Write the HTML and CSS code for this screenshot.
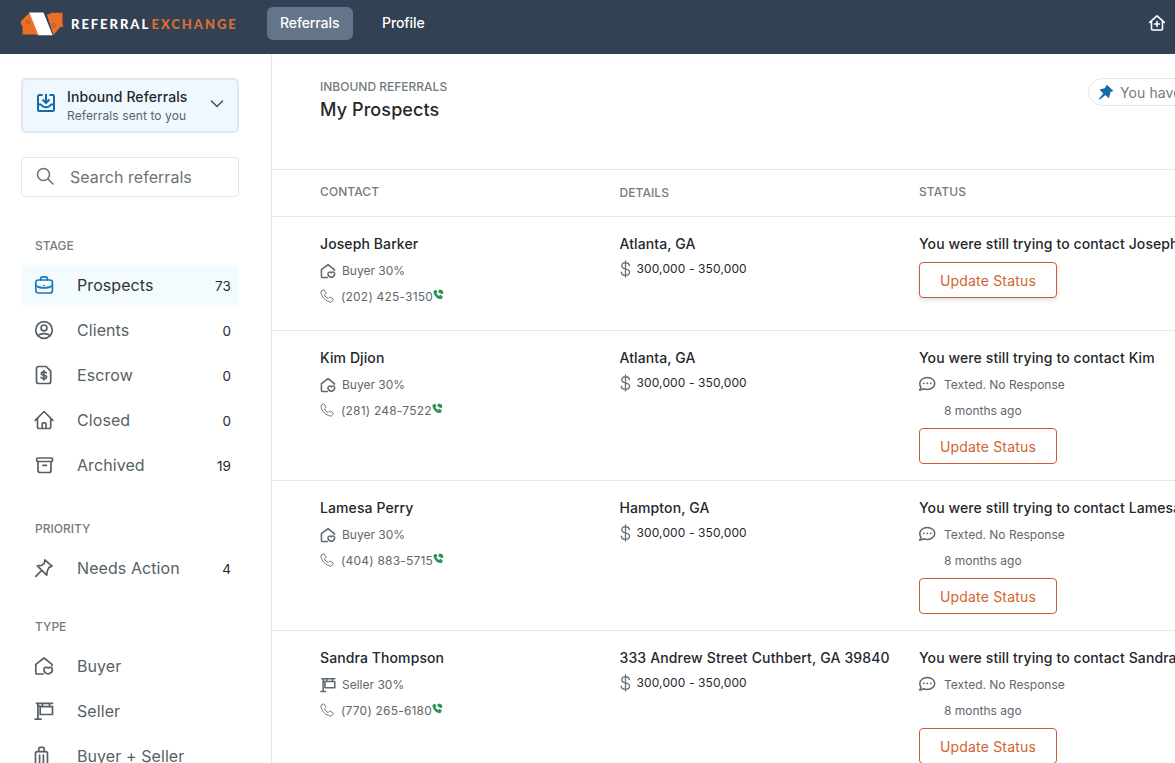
FILE: index.html
```html
<!DOCTYPE html>
<html lang="en">
<head>
<meta charset="utf-8">
<title>My Prospects</title>
<link rel="stylesheet" href="styles.css">
</head>
<body>
<svg class="sprite" aria-hidden="true">
  <symbol id="i-buyer" viewBox="0 0 20 20"><path d="M9.300 18H2.800a1 1 0 0 1-1-1V8.300L10 2l8 6.300v1.200"/><path d="M13.800 11.900c-1-1.200-3.900-.7-3.900 1.600 0 2.400 2.100 4 4.200 4.500 2.100-.5 4.300-2.100 4.300-4.500 0-2.300-2.800-2.800-3.800-1.600-.2.300-.6.300-.8 0z"/></symbol>
  <symbol id="i-seller" viewBox="0 0 20 20"><path d="M2.500 2.300h16M3.900 2.300v15.900M1.200 18.200h5.800M3.900 5.200h2M8.500 2.500v3M15.500 2.500v3M6.200 5.600h12.300v7.900H6.200z"/></symbol>
  <symbol id="i-phone" viewBox="0 0 20 20"><path d="M2 3.300 4.300 1.400c.6-.4 1.300-.3 1.700.2l2.200 3.700c.4.700.2 1.300-.3 1.700L6.400 8.400c.9 2.100 2.900 4.200 5.300 5.300l1.400-1.600c.4-.5 1.100-.6 1.700-.3l3.600 2.100c.6.400.7 1.100.4 1.700l-1.900 2.500c-.4.500-1 .7-1.700.6C7.800 17.400 2.100 11.200 1.400 4.900c-.1-.7.100-1.200.6-1.600z"/></symbol>
  <symbol id="i-call" viewBox="0 0 12 12"><path d="M1.300 1.500 3.400.8l1.500 2.700-1.200 1.200c.7 1.400 1.700 2.300 3 2.900l1.200-1.200 2.700 1.400-.6 2.400c-.2.500-.6.800-1.200.8C4.400 10.800.6 7 .5 2.700c0-.6.300-1 .8-1.200z"/><path d="M5.900 1.400 7.800.6l2.600 1 .9 2.200-.8 1.900-1.700-.5-2.600-1.300z"/></symbol>
  <symbol id="i-dollar" viewBox="0 0 12 20"><path d="M6 1v18M10.300 6.200C10 4 8.400 3 6 3 3.500 3 1.800 4.200 1.800 6.400c0 2.300 1.800 3 4.200 3.500 2.600.6 4.500 1.400 4.500 3.800C10.500 16 8.600 17 6 17c-2.600 0-4.400-1.100-4.700-3.600"/></symbol>
  <symbol id="i-chat" viewBox="0 0 20 20"><path d="M10.300 2.800c4.600 0 8.300 2.900 8.300 6.600S14.900 16 10.300 16c-1.500 0-2.900-.3-4.100-.8-1 .8-2.500 1.500-4.500 1.500 1.100-1 1.500-2.200 1.500-3.300C2.400 12.300 2 10.900 2 9.400c0-3.700 3.700-6.600 8.300-6.600z"/><path class="dots" d="M6.500 9.300h.1M10.300 9.300h.1M14.100 9.300h.1"/></symbol>
</svg>

<header class="topbar">
  <a class="logo">
    <svg class="logo-mark" viewBox="0 0 44 24" width="44" height="24">
      <path fill="#ec6f28" d="M1 9 9.500.8H14L20 23H2.500V14.500L.8 12zM27 3l1.500-1.500 1 1L31 .8h11.500v11l.8 2.700-3 .5L33.500 23z"/>
      <path fill="#fff" d="M9.300.5h14.200l9.200 22.800H18.500z"/>
      <path fill="none" stroke="#8e5336" stroke-width="1" d="M8 8.400l2 2-2 2-2-2zM34 11.400l2 2-2 2-2-2zM2.500 14.500v8h13"/>
    </svg>
    <span class="logo-text">REFERRAL</span><span class="logo-text logo-accent">EXCHANGE</span>
  </a>
  <nav class="nav"><a class="nav-link active">Referrals</a><a class="nav-link">Profile</a></nav>
  <svg class="home-add" viewBox="0 0 18 18" width="18" height="18"><path d="M1.700 8.300 9 1.900l7.300 6.400M3.500 7v8.100c0 .6.300.9.900.9h9.200c.6 0 .9-.3.900-.9V7M9 7.500v5M6.500 10h5"/></svg>
</header>

<div class="layout">
  <aside class="sidebar">
    <div class="switcher">
      <svg class="switcher-icon" viewBox="0 0 20 20" width="20" height="20"><path d="M6.600 2H3.300A1.300 1.300 0 0 0 2 3.300v13.400A1.300 1.300 0 0 0 3.300 18h13.400a1.300 1.300 0 0 0 1.300-1.300V3.300A1.300 1.300 0 0 0 16.700 2h-3.300M10 1v8.500M6.500 6.500 10 10l3.500-3.500M2 11.500h2.500c1.300 0 1.500 2.700 5.500 2.700s4.200-2.700 5.500-2.700H18"/></svg>
      <div class="switcher-text"><div class="switcher-title">Inbound Referrals</div><div class="switcher-sub">Referrals sent to you</div></div>
      <svg class="chevron" viewBox="0 0 14 8" width="14" height="8"><path d="m1.500 1 5.500 5.500L12.500 1"/></svg>
    </div>
    <div class="search"><svg viewBox="0 0 18 18" width="18" height="18"><circle cx="7.500" cy="7.500" r="6"/><path d="m12 12 5 5"/></svg><span>Search referrals</span></div>

    <h2 class="group-title stage">STAGE</h2>
    <ul class="menu">
      <li class="item selected"><svg class="icon" viewBox="0 0 20 20"><rect x="1.800" y="5" width="16.600" height="13" rx="2.500"/><path d="M6.800 5V3.600c0-1.200.6-1.800 1.800-1.800h3c1.200 0 1.800.6 1.800 1.800V5M1.800 10.500c3.500 3.100 13.100 3.100 16.600 0M10.100 10.500h.1"/></svg><span class="label">Prospects</span><span class="count">73</span></li>
      <li class="item"><svg class="icon" viewBox="0 0 20 20"><circle cx="10" cy="10" r="8.300"/><circle cx="10" cy="7.900" r="2.900"/><path d="M4.300 15.900c.9-1.700 3-2.300 5.700-2.300s4.800.6 5.700 2.300"/></svg><span class="label">Clients</span><span class="count">0</span></li>
      <li class="item"><svg class="icon" viewBox="0 0 20 20"><path d="M4.500 1.500h7.600l4.600 4.700v10.300a2 2 0 0 1-2 2H4.500a2 2 0 0 1-2-2v-13a2 2 0 0 1 2-2z"/><path d="M12.300 7.900c-.4-.8-1.200-1.100-2.500-1.100-1.500 0-2.500.5-2.500 1.600 0 2.500 5.200.9 5.200 3.500 0 1.100-1.100 1.700-2.600 1.700-1.400 0-2.300-.4-2.700-1.300M9.800 5.500v9.500"/></svg><span class="label">Escrow</span><span class="count">0</span></li>
      <li class="item"><svg class="icon" viewBox="0 0 20 20"><path d="M1.200 10.300 10.100 1.500l8.800 8.800M3.500 8.500v8.800c0 .8.400 1.200 1.200 1.200h10.800c.8 0 1.200-.4 1.200-1.200V8.500M8.200 18.300v-4.200c0-.8.400-1.200 1.200-1.200h1.400c.8 0 1.200.4 1.200 1.200v4.200"/></svg><span class="label">Closed</span><span class="count">0</span></li>
      <li class="item"><svg class="icon" viewBox="0 0 20 20"><rect x="2.700" y="3" width="15.800" height="3.500" rx="1"/><path d="M4 6.800v8.700c0 1.200.8 2 2 2h9c1.200 0 2-.8 2-2V6.800M9 10.300h3.400"/></svg><span class="label">Archived</span><span class="count">19</span></li>
    </ul>

    <h2 class="group-title priority">PRIORITY</h2>
    <ul class="menu">
      <li class="item"><svg class="icon" viewBox="0 0 20 20"><path d="m10.800 1.800 7.200 6.400-3 1.200-1.700 3.600-.6 4.100-9.400-9.300 4.300-.4 2.700-2.100zM7.700 12.400l-6 6"/></svg><span class="label">Needs Action</span><span class="count">4</span></li>
    </ul>

    <h2 class="group-title">TYPE</h2>
    <ul class="menu">
      <li class="item"><svg class="icon"><use href="#i-buyer"/></svg><span class="label">Buyer</span></li>
      <li class="item"><svg class="icon"><use href="#i-seller"/></svg><span class="label">Seller</span></li>
      <li class="item"><svg class="icon" viewBox="0 0 20 20"><path d="M1.500 20V7.500c0-1.200.7-1.900 1.900-1.900h8.200c1.200 0 1.900.7 1.900 1.900V20M4.800 5.500v-3c0-.8.400-1.200 1.200-1.200h3c.8 0 1.200.4 1.200 1.200v3M5.600 9v11M9.400 9v11"/></svg><span class="label">Buyer + Seller</span></li>
    </ul>
  </aside>

  <main class="main">
    <div class="page-head">
      <div class="page-titles"><div class="eyebrow">INBOUND REFERRALS</div><h1 class="title">My Prospects</h1></div>
      <div class="notice"><svg viewBox="0 0 16 16" width="16" height="16"><path d="M8.800.8 15.500 7l-3 1-1.600 6.300L7.300 11 2 15.500l-1-.7 4.300-5.200L1.400 5.500l5.400-1.300z"/></svg><span>You have</span></div>
    </div>
    <div class="row head"><div>CONTACT</div><div class="details-head">DETAILS</div><div>STATUS</div></div>

    <div class="row lead first">
      <div><div class="name">Joseph Barker</div>
        <div class="meta"><svg class="small"><use href="#i-buyer"/></svg>Buyer 30%</div>
        <div class="meta phone"><svg class="small thin"><use href="#i-phone"/></svg>(202) 425-3150<svg class="call"><use href="#i-call"/></svg></div></div>
      <div><div class="name">Atlanta, GA</div><div class="price"><svg class="dollar"><use href="#i-dollar"/></svg>300,000 - 350,000</div></div>
      <div><div class="name">You were still trying to contact Joseph</div><button class="update hover">Update Status</button></div>
    </div>

    <div class="row lead">
      <div><div class="name">Kim Djion</div>
        <div class="meta"><svg class="small"><use href="#i-buyer"/></svg>Buyer 30%</div>
        <div class="meta phone"><svg class="small thin"><use href="#i-phone"/></svg>(281) 248-7522<svg class="call"><use href="#i-call"/></svg></div></div>
      <div><div class="name">Atlanta, GA</div><div class="price"><svg class="dollar"><use href="#i-dollar"/></svg>300,000 - 350,000</div></div>
      <div><div class="name">You were still trying to contact Kim</div>
        <div class="meta status"><svg class="chat"><use href="#i-chat"/></svg>Texted. No Response</div><div class="meta ago">8 months ago</div><button class="update">Update Status</button></div>
    </div>

    <div class="row lead">
      <div><div class="name">Lamesa Perry</div>
        <div class="meta"><svg class="small"><use href="#i-buyer"/></svg>Buyer 30%</div>
        <div class="meta phone"><svg class="small thin"><use href="#i-phone"/></svg>(404) 883-5715<svg class="call"><use href="#i-call"/></svg></div></div>
      <div><div class="name">Hampton, GA</div><div class="price"><svg class="dollar"><use href="#i-dollar"/></svg>300,000 - 350,000</div></div>
      <div><div class="name">You were still trying to contact Lamesa</div>
        <div class="meta status"><svg class="chat"><use href="#i-chat"/></svg>Texted. No Response</div><div class="meta ago">8 months ago</div><button class="update">Update Status</button></div>
    </div>

    <div class="row lead">
      <div><div class="name">Sandra Thompson</div>
        <div class="meta"><svg class="small"><use href="#i-seller"/></svg>Seller 30%</div>
        <div class="meta phone"><svg class="small thin"><use href="#i-phone"/></svg>(770) 265-6180<svg class="call"><use href="#i-call"/></svg></div></div>
      <div><div class="name address">333 Andrew Street Cuthbert, GA 39840</div><div class="price"><svg class="dollar"><use href="#i-dollar"/></svg>300,000 - 350,000</div></div>
      <div><div class="name">You were still trying to contact Sandra</div>
        <div class="meta status"><svg class="chat"><use href="#i-chat"/></svg>Texted. No Response</div><div class="meta ago">8 months ago</div><button class="update">Update Status</button></div>
    </div>
  </main>
</div>
</body>
</html>
```
FILE: styles.css
```css
* { box-sizing: border-box; }
html, body { height: 100%; }
body {
  margin: 0;
  overflow: hidden;
  display: flex;
  flex-direction: column;
  background: #fff;
  color: #25282b;
  font-family: Inter, "Liberation Sans", sans-serif;
}
h1, h2, ul { margin: 0; padding: 0; }
svg {
  flex: none;
  fill: none;
  stroke: currentColor;
  stroke-width: 1.6;
  stroke-linecap: round;
  stroke-linejoin: round;
}
.sprite { display: none; }

.topbar {
  flex: none;
  height: 54px;
  display: flex;
  align-items: flex-start;
  background: #334155;
  color: #fff;
}
.logo { display: flex; align-items: center; height: 48px; width: 267px; padding-left: 20px; }
.logo-mark { stroke: none; margin-right: 7px; }
.logo-text { font: 900 13px/16px Lato, sans-serif; letter-spacing: 1.950px; width: 80.500px; margin-top: 0; }
.logo-accent { color: #dd6e31; }
.nav { display: flex; gap: 16px; margin-top: 7px; }
.nav-link {
  height: 33px;
  padding: 0 13px;
  border-radius: 6px;
  font-size: 14px;
  font-weight: 500;
  line-height: 32px;
  letter-spacing: -.1px;
}
.nav-link.active { background: #64748b; width: 86px; }
.home-add { margin: 14px 9px 0 auto; }

.layout { flex: 1; min-height: 0; display: flex; }
.sidebar { flex: none; width: 272px; padding: 24px 32px 0 21px; border-right: 1px solid #e5e7e9; }
.switcher {
  height: 55px;
  display: flex;
  align-items: center;
  padding: 0 14px;
  border: 2px solid #dde8f1;
  border-radius: 5px;
  background: #f0f8ff;
}
.switcher-icon { color: #176aa8; stroke-width: 2; stroke-linecap: butt; margin: -5px 11px 0 -1px; }
.switcher-title { font-size: 14px; font-weight: 500; line-height: 19px; letter-spacing: .1px; }
.switcher-sub { padding-top: 1px; font-size: 12px; line-height: 18px; letter-spacing: .1px; color: #5c6368; }
.chevron { margin: -3px -1px 0 auto; color: #4d565c; }
.search {
  height: 40px;
  margin-top: 24px;
  padding: 0 14px;
  display: flex;
  align-items: center;
  gap: 16px;
  border: 1px solid #e3e5e7;
  border-radius: 4px;
  color: #6b7378;
  font-size: 16px;
  letter-spacing: .05px;
}
.search svg { margin-top: -3px; }
.group-title { margin: 29px 0 9px 14px; font-size: 12px; font-weight: 500; line-height: 20px; color: #737b80; }
.stage { margin-top: 39px; }
.priority { margin-top: 34px; }
.menu { list-style: none; display: grid; gap: 5px; }
.item { height: 40px; display: flex; align-items: center; padding: 0 8px 0 13px; color: #575f64; }
.icon { width: 20px; height: 20px; margin-right: 23px; stroke-width: 1.700; }
.label { font-size: 16px; letter-spacing: .08px; }
.count { margin-left: auto; padding-top: 1px; font-size: 13.500px; letter-spacing: .1px; color: #25282b; }
.selected { background: #f4fbff; }
.selected .icon { color: #187ab9; }
.selected .label { color: #303437; }

.main { flex: 1; min-width: 0; overflow: hidden; }
.page-head { height: 115px; padding: 24px 0 0 48px; display: flex; }
.eyebrow { font-size: 12px; font-weight: 500; line-height: 18px; color: #737b80; }
.title { font-size: 18px; font-weight: 500; line-height: 28px; letter-spacing: .1px; }
.page-titles { flex: none; width: 768px; }
.notice {
  flex: none;
  width: 300px;
  height: 28px;
  display: flex;
  align-items: center;
  gap: 6px;
  padding: 0 16px 0 9px;
  border: 1px solid #e3e5e7;
  border-radius: 14px;
  font-size: 14px;
  letter-spacing: .1px;
  color: #737b80;
  white-space: nowrap;
}
.notice svg { fill: #146ba7; stroke: none; }
.row { display: grid; grid-template-columns: 299.500px 299.500px 300px; padding-left: 48px; border-top: 1px solid #e5e7e9; }
.head { height: 47px; font-size: 12px; font-weight: 500; line-height: 44px; letter-spacing: .08px; color: #737b80; }
.details-head { padding-top: 1px; }
.lead { height: 150px; padding-top: 17px; }
.first { height: 114px; }
.name { font-size: 14px; font-weight: 500; line-height: 20px; white-space: nowrap; letter-spacing: .1px; }
.address { letter-spacing: .15px; }
.meta { display: flex; align-items: center; height: 26px; padding-bottom: 2px; font-size: 12px; color: #5f676c; white-space: nowrap; }
.name + .meta { margin-top: 4px; }
.small { width: 16px; height: 16px; margin: 2px 6px 0 0; stroke-width: 1.900; }
.thin { width: 14px; height: 14px; margin: 0 7px 0 0; stroke-width: 1.300; }
.phone { letter-spacing: .2px; }
.call { width: 11px; height: 11px; margin-top: -3px; fill: #2d9255; stroke: none; }
.price { display: flex; align-items: center; height: 20px; margin-top: 4px; font-size: 12px; letter-spacing: .12px; }
.dollar { width: 11px; height: 18px; margin: 2px 6px 0 0; color: #6b7378; stroke-width: 1.500; }
.chat { width: 18px; height: 18px; margin: 0 8px 0 -1px; stroke-width: 1.700; }
.dots { stroke-width: 2; }
.ago { padding-left: 25px; }
.update {
  display: block;
  width: 138px;
  height: 36px;
  margin-top: 4px;
  padding: 2px 0 0;
  border: 1px solid #c75f30;
  border-radius: 4px;
  background: #fff;
  color: #d2632f;
  font: 400 14px/32px Inter, "Liberation Sans", sans-serif;
  letter-spacing: .18px;
}
.name + .update { margin-top: 8px; }
.hover { box-shadow: 0 2px 4px #0002; }
```
